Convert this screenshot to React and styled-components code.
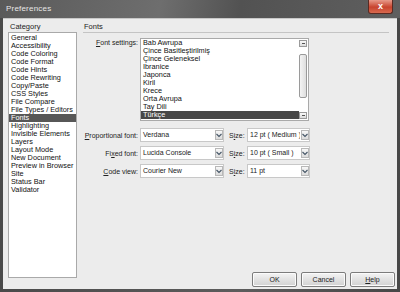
import React from "react";
import styled, { createGlobalStyle } from "styled-components";

const GlobalStyle = createGlobalStyle`
  html, body { margin: 0; padding: 0; background: #3e3e3e; }
  body { font-family: "Liberation Sans", Arial, sans-serif; font-size: 7px; color: #111; }
`;

const categories = [
  "General", "Accessibility", "Code Coloring", "Code Format", "Code Hints",
  "Code Rewriting", "Copy/Paste", "CSS Styles", "File Compare",
  "File Types / Editors", "Fonts", "Highlighting", "Invisible Elements",
  "Layers", "Layout Mode", "New Document", "Preview in Browser", "Site",
  "Status Bar", "Validator",
];

const encodings = [
  "Bab Awrupa", "Çince Basitleştirilmiş", "Çince Geleneksel", "İbranice",
  "Japonca", "Kiril", "Krece", "Orta Avrupa", "Tay Dili", "Türkçe", "Vietnamca",
];

const Key = ({ children }) => <u>{children}</u>;

const Select = ({ value, width }) => (
  <SelectBox $width={width}>
    <SelectValue>{value}</SelectValue>
    <DropButton>
      <svg width="6" height="5" viewBox="0 0 6 5">
        <path d="M0.5 1 L3 3.5 L5.5 1" fill="none" stroke="#456" strokeWidth="1.1" />
      </svg>
    </DropButton>
  </SelectBox>
);

const FontRow = ({ label, font, size }) => (
  <Row>
    <Label>{label}</Label>
    <Select value={font} width={84} />
    <SizeLabel>
      S<Key>i</Key>ze:
    </SizeLabel>
    <Select value={size} width={63} />
  </Row>
);

const App = () => (
  <>
    <GlobalStyle />
    <Window>
      <TitleBar>
        <Title>Preferences</Title>
        <CloseButton>x</CloseButton>
      </TitleBar>
      <Body>
        <Sidebar>
          <SectionLabel>Category</SectionLabel>
          <CategoryList>
            {categories.map((c) => (
              <Item key={c} $selected={c === "Fonts"}>
                {c}
              </Item>
            ))}
          </CategoryList>
        </Sidebar>
        <Main>
          <Heading>Fonts</Heading>
          <Form>
            <Row $top>
              <Label $top>
                <Key>F</Key>ont settings:
              </Label>
              <ListBox>
                <ListItems>
                  {encodings.map((e) => (
                    <Item key={e} $selected={e === "Türkçe"} $dark>
                      {e}
                    </Item>
                  ))}
                </ListItems>
                <ScrollBar>
                  <ScrollButton>
                    <ScrollGlyph />
                  </ScrollButton>
                  <ScrollThumb />
                  <ScrollButton>
                    <ScrollGlyph />
                  </ScrollButton>
                </ScrollBar>
              </ListBox>
            </Row>
            <RowGroup>
              <FontRow
                label={<><Key>P</Key>roportional font:</>}
                font="Verdana"
                size="12 pt ( Medium )"
              />
              <FontRow
                label={<>Fi<Key>x</Key>ed font:</>}
                font="Lucida Console"
                size="10 pt ( Small )"
              />
              <FontRow
                label={<><Key>C</Key>ode view:</>}
                font="Courier New"
                size="11 pt"
              />
            </RowGroup>
          </Form>
          <Footer>
            <Button>OK</Button>
            <Button>Cancel</Button>
            <Button>
              <Key>H</Key>elp
            </Button>
          </Footer>
        </Main>
      </Body>
    </Window>
  </>
);

const Window = styled.div`
  width: 400px;
  height: 292px;
  box-sizing: border-box;
  padding: 0 3px 3px;
  background: linear-gradient(90deg, #4a4a4a, #5c5c5c 60%, #474747);
  display: flex;
  flex-direction: column;
`;

const TitleBar = styled.div`
  height: 18px;
  display: flex;
  align-items: flex-start;
  justify-content: space-between;
  background: linear-gradient(100deg, #5a5a5a 0%, #6e6e6e 40%, #525252 60%, #5f5f5f 100%);
  margin: 0 -3px;
  padding: 0 7px 0 6px;
`;

const Title = styled.span`
  font-size: 8px;
  color: #e8e8e8;
  line-height: 18px;
  letter-spacing: 0.2px;
`;

const CloseButton = styled.div`
  width: 25px;
  height: 14px;
  box-sizing: border-box;
  border: 1px solid #5a2a22;
  border-top: none;
  border-radius: 0 0 3px 3px;
  background: linear-gradient(#e79a8a, #c8442e 55%, #d86a4f);
  color: #fff;
  font-weight: bold;
  font-size: 9px;
  line-height: 12px;
  text-align: center;
`;

const Body = styled.div`
  flex: 1;
  display: flex;
  background: #ececec;
  border-top: 1px solid #c8c8c8;
`;

const Sidebar = styled.div`
  width: 77px;
  flex-shrink: 0;
  box-sizing: border-box;
  padding: 3px 3px 11px 5px;
  display: flex;
  flex-direction: column;
`;

const SectionLabel = styled.div`
  height: 9px;
  line-height: 9px;
  padding-left: 2px;
  margin-bottom: 1px;
  font-size: 7.5px;
  color: #222;
`;

const CategoryList = styled.div`
  flex: 1;
  background: #fff;
  border: 1px solid #a9a9a9;
  padding: 1px 0 0;
  overflow: hidden;
`;

const Item = styled.div`
  height: 8px;
  line-height: 8px;
  padding-left: 2px;
  font-size: 7.3px;
  white-space: nowrap;
  overflow: hidden;
  background: ${(p) => (p.$selected ? (p.$dark ? "#474747" : "#575757") : "transparent")};
  color: ${(p) => (p.$selected ? "#fff" : "#111")};
`;

const Main = styled.div`
  flex: 1;
  display: flex;
  flex-direction: column;
  padding: 3px 5px 2px 3px;
`;

const Heading = styled.div`
  height: 9px;
  line-height: 9px;
  padding-left: 1px;
  padding-bottom: 1px;
  border-bottom: 1px solid #c4c4c4;
  margin-right: 3px;
  font-size: 7.5px;
  color: #222;
`;

const Form = styled.div`
  flex: 1;
  display: flex;
  flex-direction: column;
  padding-top: 5px;
`;

const Row = styled.div`
  display: flex;
  align-items: ${(p) => (p.$top ? "flex-start" : "center")};
  height: ${(p) => (p.$top ? "auto" : "14px")};
`;

const RowGroup = styled.div`
  display: flex;
  flex-direction: column;
  gap: 4px;
  margin-top: 7px;
`;

const Label = styled.div`
  width: 55px;
  flex-shrink: 0;
  margin-right: 2px;
  text-align: right;
  white-space: nowrap;
  color: #222;
  padding-top: ${(p) => (p.$top ? "1px" : "0")};
`;

const ListBox = styled.div`
  width: 169px;
  height: 83px;
  box-sizing: border-box;
  background: #fff;
  border: 1px solid #a9a9a9;
  display: flex;
`;

const ListItems = styled.div`
  flex: 1;
  overflow: hidden;
`;

const ScrollBar = styled.div`
  width: 8px;
  display: flex;
  flex-direction: column;
  padding: 1px 1px 1px 0;
  gap: 7px;
`;

const ScrollButton = styled.div`
  height: 7px;
  box-sizing: border-box;
  border: 1px solid #9a9a9a;
  background: linear-gradient(#fafafa, #dcdcdc);
  display: flex;
  align-items: center;
  justify-content: center;
`;

const ScrollGlyph = styled.div`
  width: 3px;
  height: 1px;
  background: #555;
`;

const ScrollThumb = styled.div`
  flex: 1;
  margin-bottom: 7px;
  border: 1px solid #9a9a9a;
  border-radius: 2px;
  background: linear-gradient(90deg, #f4f4f4, #dedede);
`;

const SelectBox = styled.div`
  width: ${(p) => p.$width}px;
  height: 14px;
  flex-shrink: 0;
  box-sizing: border-box;
  display: flex;
  background: #fff;
  border: 1px solid #c8c8c8;
`;

const SelectValue = styled.div`
  flex: 1;
  padding-left: 2px;
  line-height: 12px;
  white-space: pre;
  overflow: hidden;
  color: #222;
`;

const DropButton = styled.div`
  width: 8px;
  flex-shrink: 0;
  margin: 1px 0 1px 1px;
  box-sizing: border-box;
  border: 1px solid #b8b8b8;
  background: linear-gradient(#f8f8f8, #dcdcdc);
  display: flex;
  align-items: center;
  justify-content: center;
`;

const SizeLabel = styled.div`
  width: 17px;
  flex-shrink: 0;
  margin: 0 1px 0 5px;
  color: #222;
`;

const Footer = styled.div`
  display: flex;
  justify-content: flex-end;
  gap: 4px;
  margin-right: -3px;
`;

const Button = styled.div`
  width: 45px;
  height: 15px;
  box-sizing: border-box;
  border: 1px solid #7c7c7c;
  border-radius: 2px;
  background: linear-gradient(#f4f4f4, #e2e2e2 50%, #d2d2d2);
  box-shadow: inset 0 0 0 1px #fbfbfb;
  text-align: center;
  line-height: 13px;
  font-size: 7px;
  color: #222;
`;

export default App;
